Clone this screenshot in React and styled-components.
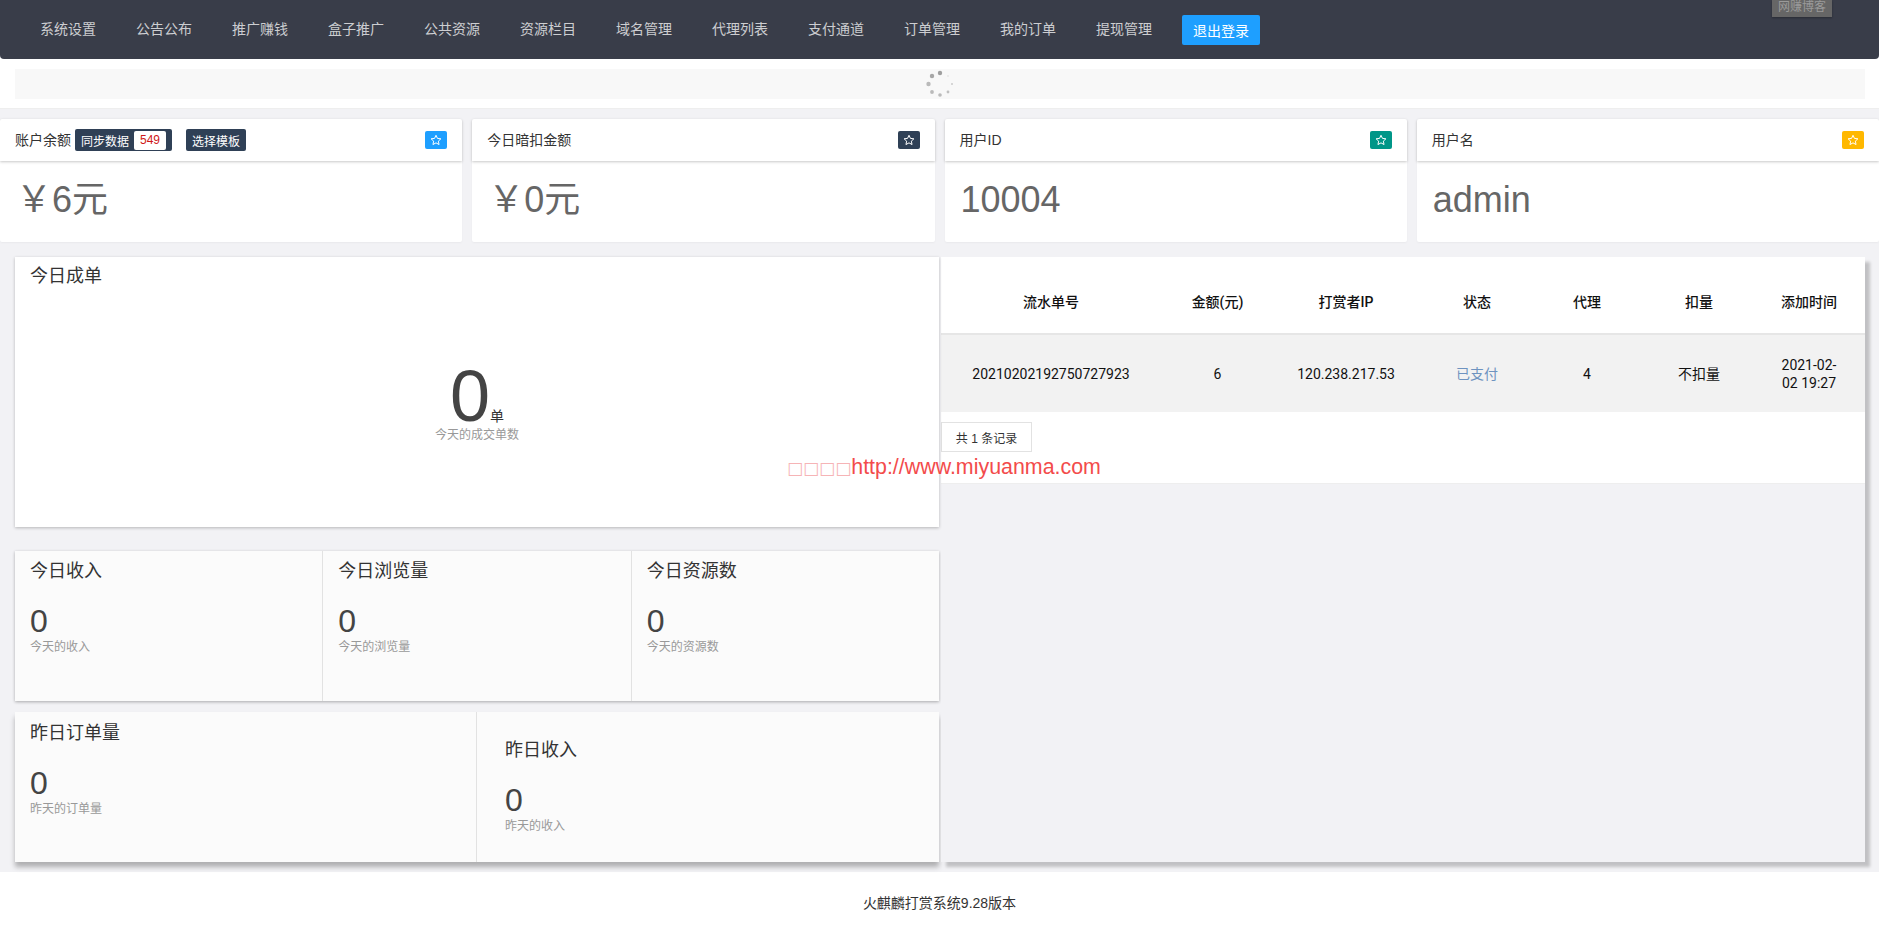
import React from "react";
import styled, { createGlobalStyle } from "styled-components";

const CJK = `"Liberation Sans", "Noto Sans CJK SC", sans-serif`;

const Global = createGlobalStyle`
  html, body { margin: 0; padding: 0; }
  body { background: #fff; font-family: ${CJK}; color: #333; font-size: 14px; }
  * { box-sizing: border-box; }
`;

const Page = styled.div`position: relative; width: 1879px; height: 928px; overflow: hidden; background: #fff;`;
const Header = styled.header`
  position: relative; height: 59px; background: #393d49; display: flex; align-items: center;
  padding: 0 0 0 40px; border-radius: 0 0 4px 4px;
`;
const NavItem = styled.a`width: 96px; flex: none; color: rgba(255,255,255,.75); font-size: 14px; line-height: 59px; white-space: nowrap;`;
const LogoutBtn = styled.a`
  height: 30px; width: 78px; margin-left: -10px; background: #1e9fff; color: #fff; border-radius: 2px;
  display: flex; align-items: center; justify-content: center; font-size: 14px;
`;
const FloatTag = styled.div`
  position: absolute; top: 0; left: 1772px; width: 60px; height: 17px; background: #666;
  color: #9a9a9a; font-size: 12px; line-height: 15px; text-align: center; box-shadow: 0 1px 2px rgba(0,0,0,.3);
`;
const Content = styled.div`background: #f2f2f5; height: 813px; padding-bottom: 1px;`;
const LoaderPanel = styled.div`
  height: 50px; background: #fff; padding: 10px 14px 10px 15px; border-bottom: 1px solid #eee;
`;
const LoaderBar = styled.div`height: 30px; background: #f8f8f8; display: flex; align-items: center; justify-content: center;`;
const StatRow = styled.div`display: grid; grid-template-columns: repeat(4, 1fr); column-gap: 10px; margin-top: 10px;`;
const StatCard = styled.div`background: #fff; height: 123px; border-radius: 2px; box-shadow: 0 1px 2px rgba(0,0,0,.04);`;
const StatHead = styled.div`
  height: 42px; padding: 0 15px; display: flex; align-items: center; color: #333; font-size: 14px;
  box-shadow: 0 1px 3px rgba(0,0,0,.22); border-radius: 2px 2px 0 0;
`;
const HeadTitle = styled.span`line-height: 20px;`;
const DarkTag = styled.span`
  height: 22px; background: #2f4056; color: #fff; font-size: 12px; border-radius: 2px; margin-left: ${p => p.$ml}px;
  padding: 0 6px; display: inline-flex; align-items: center;
`;
const CountChip = styled.span`
  width: 32px; height: 19px; margin-left: 5px; background: #fff; color: #d01818; border-radius: 2px;
  display: inline-flex; align-items: center; justify-content: center; font-size: 12px;
`;
const StarBadge = styled.span`
  margin-left: auto; width: 22px; height: 18px; border-radius: 2px; background: ${p => p.$bg};
  display: flex; align-items: center; justify-content: center;
`;
const StatValue = styled.div`padding: 0 15px 0 16px; height: 81px; line-height: 78px; font-size: 36px; color: #666;`;

const Main = styled.div`display: grid; grid-template-columns: 924px 924px; column-gap: 2px; padding: 15px 0 0 15px;`;
const LeftCol = styled.div`display: flex; flex-direction: column;`;
const OrderPanel = styled.div`
  position: relative; height: 270px; background: #fff; padding: 8px 15px; box-shadow: 0 1px 3px rgba(0,0,0,.25); margin-bottom: 24px;
`;
const PanelTitle = styled.div`font-size: 18px; line-height: 22px; color: #333;`;
const BigWrap = styled.div`margin-top: 73px; text-align: center;`;
const BigNum = styled.div`font-size: 72px; line-height: 72px; color: #444; height: 72px; display: flex; align-items: baseline; justify-content: center;`;
const BigUnit = styled.span`font-size: 14px; line-height: 14px; color: #333;`;
const Small = styled.div`font-size: 12px; color: #999; line-height: 16px;`;
const BigSub = styled(Small)`margin-top: -5px;`;
const MiniRow = styled.div`display: grid; grid-template-columns: ${p => p.$cols}; column-gap: 1px; margin-bottom: ${p => p.$mb}px; background: #e2e2e2;
  box-shadow: ${p => p.$heavy ? "0 5px 5px rgba(0,0,0,.28)" : "0 1px 3px rgba(0,0,0,.3)"};`;
const MiniCard = styled.div`height: 150px; background: #fbfbfb; padding: ${p => p.$pt}px 15px 0 ${p => p.$pl}px;`;
const MiniNum = styled.div`font-size: 32px; line-height: 36px; color: #444; margin-top: 21px;`;

const RightCol = styled.div`
  height: 605px; background: #f2f2f5; box-shadow: 5px 5px 3px rgba(0,0,0,.2);
`;
const TablePanel = styled.div`background: #fff; height: 227px; border-bottom: 1px solid #eee;`;
const Table = styled.table`width: 924px; table-layout: fixed; border-collapse: collapse; font-family: Roboto, "Noto Sans CJK SC", sans-serif; color: #111;`;
const Th = styled.th`height: 77px; border-bottom: 2px solid #e6e6e6; font-size: 14px; font-weight: 500; text-align: center; padding: 12px ${p => p.$pr || 0}px 0 0;`;
const Td = styled.td`height: 78px; background: #f2f2f2; font-size: 14px; text-align: center; padding: 0 ${p => p.$pr || 0}px 0 0; line-height: 18px; color: ${p => p.$color || "#111"};`;
const TimeText = styled.div`width: 68px; margin: 0 auto;`;
const Pager = styled.div`
  width: 91px; height: 30px; margin-top: 10px; border: 1px solid #e2e2e2; font-size: 12px; color: #333;
  display: flex; align-items: center; justify-content: center; background: #fff; font-family: ${CJK};
`;
const Footer = styled.footer`height: 56px; background: #fff; text-align: center; line-height: 62px; font-size: 14px; color: #333;`;
const Watermark = styled.div`
  position: absolute; left: 787px; top: 455px; font-size: 21.4px; line-height: 24px; color: #f34b4b; white-space: nowrap;
`;
const Tofu = styled.span`color: #f6b4b6; font-family: "DejaVu Sans", sans-serif; font-size: 17px;`;

const Star = () => (
  <svg width="12" height="12" viewBox="0 0 24 24" fill="none" stroke="#fff" strokeWidth="2" strokeLinejoin="round">
    <path d="M12 2.5l2.9 6.3 6.9.8-5.1 4.7 1.4 6.8-6.1-3.4-6.1 3.4 1.4-6.8-5.1-4.7 6.9-.8z" />
  </svg>
);

const Spinner = () => {
  const dots = [
    [0, -11, 2.2, .55], [-8, -8, 2.2, .5], [-11.5, 0, 2.2, .38], [-8, 8, 1.9, .38],
    [0, 11, 1.8, .38], [8, 8, 1.4, .35], [12, 0, 1, .28], [8, -8, 1, .1],
  ];
  return (
    <svg width="32" height="32" viewBox="-16 -16 32 32">
      {dots.map(([x, y, r, o], i) => <circle key={i} cx={x} cy={y} r={r} fill="#555" opacity={o} />)}
    </svg>
  );
};

const nav = ["系统设置","公告公布","推广赚钱","盒子推广","公共资源","资源栏目","域名管理","代理列表","支付通道","订单管理","我的订单","提现管理"];
const stats = [
  { t: "账户余额", v: "￥6元", c: "#1e9fff", extra: true },
  { t: "今日暗扣金额", v: "￥0元", c: "#2f4056" },
  { t: "用户ID", v: "10004", c: "#009688" },
  { t: "用户名", v: "admin", c: "#ffb800" },
];
const cols = [220, 113, 144, 118, 102, 122, 105];
const heads = ["流水单号","金额(元)","打赏者IP","状态","代理","扣量","添加时间"];

const Mini = ({ title, sub, pt = 9, pl = 15 }) => (
  <MiniCard $pt={pt} $pl={pl}>
    <PanelTitle>{title}</PanelTitle>
    <MiniNum>0</MiniNum>
    <Small>{sub}</Small>
  </MiniCard>
);

export default function App() {
  return (
    <Page>
      <Global />
      <Header>
        {nav.map(n => <NavItem key={n}>{n}</NavItem>)}
        <LogoutBtn>退出登录</LogoutBtn>
        <FloatTag>网赚博客</FloatTag>
      </Header>
      <Content>
        <LoaderPanel>
          <LoaderBar><Spinner /></LoaderBar>
        </LoaderPanel>
        <StatRow>
          {stats.map(s => (
            <StatCard key={s.t}>
              <StatHead>
                <HeadTitle>{s.t}</HeadTitle>
                {s.extra && <>
                  <DarkTag $ml={4}>同步数据<CountChip>549</CountChip></DarkTag>
                  <DarkTag $ml={14}>选择模板</DarkTag>
                </>}
                <StarBadge $bg={s.c}><Star /></StarBadge>
              </StatHead>
              <StatValue>{s.v}</StatValue>
            </StatCard>
          ))}
        </StatRow>
        <Main>
          <LeftCol>
            <OrderPanel>
              <PanelTitle>今日成单</PanelTitle>
              <BigWrap>
                <BigNum>0<BigUnit>单</BigUnit></BigNum>
                <BigSub>今天的成交单数</BigSub>
              </BigWrap>
            </OrderPanel>
            <MiniRow $cols="repeat(3, 1fr)" $mb={11}>
              <Mini title="今日收入" sub="今天的收入" />
              <Mini title="今日浏览量" sub="今天的浏览量" />
              <Mini title="今日资源数" sub="今天的资源数" />
            </MiniRow>
            <MiniRow $cols="461px 1fr" $heavy $mb={0}>
              <Mini title="昨日订单量" sub="昨天的订单量" pt={10} />
              <Mini title="昨日收入" sub="昨天的收入" pt={27} pl={28} />
            </MiniRow>
          </LeftCol>
          <RightCol>
            <TablePanel>
              <Table>
                <colgroup>{cols.map((w, i) => <col key={i} style={{ width: w }} />)}</colgroup>
                <thead><tr>{heads.map((h, i) => <Th key={h} $pr={i === 6 ? 7 : 0}>{h}</Th>)}</tr></thead>
                <tbody><tr>
                  <Td>20210202192750727923</Td>
                  <Td>6</Td>
                  <Td>120.238.217.53</Td>
                  <Td $color="#6e93c0">已支付</Td>
                  <Td>4</Td>
                  <Td>不扣量</Td>
                  <Td $pr={7}><TimeText>2021-02-02 19:27</TimeText></Td>
                </tr></tbody>
              </Table>
              <Pager>共 1 条记录</Pager>
            </TablePanel>
          </RightCol>
        </Main>
      </Content>
      <Footer>火麒麟打赏系统9.28版本</Footer>
      <Watermark><Tofu>□□□□</Tofu>http://www.miyuanma.com</Watermark>
    </Page>
  );
}
